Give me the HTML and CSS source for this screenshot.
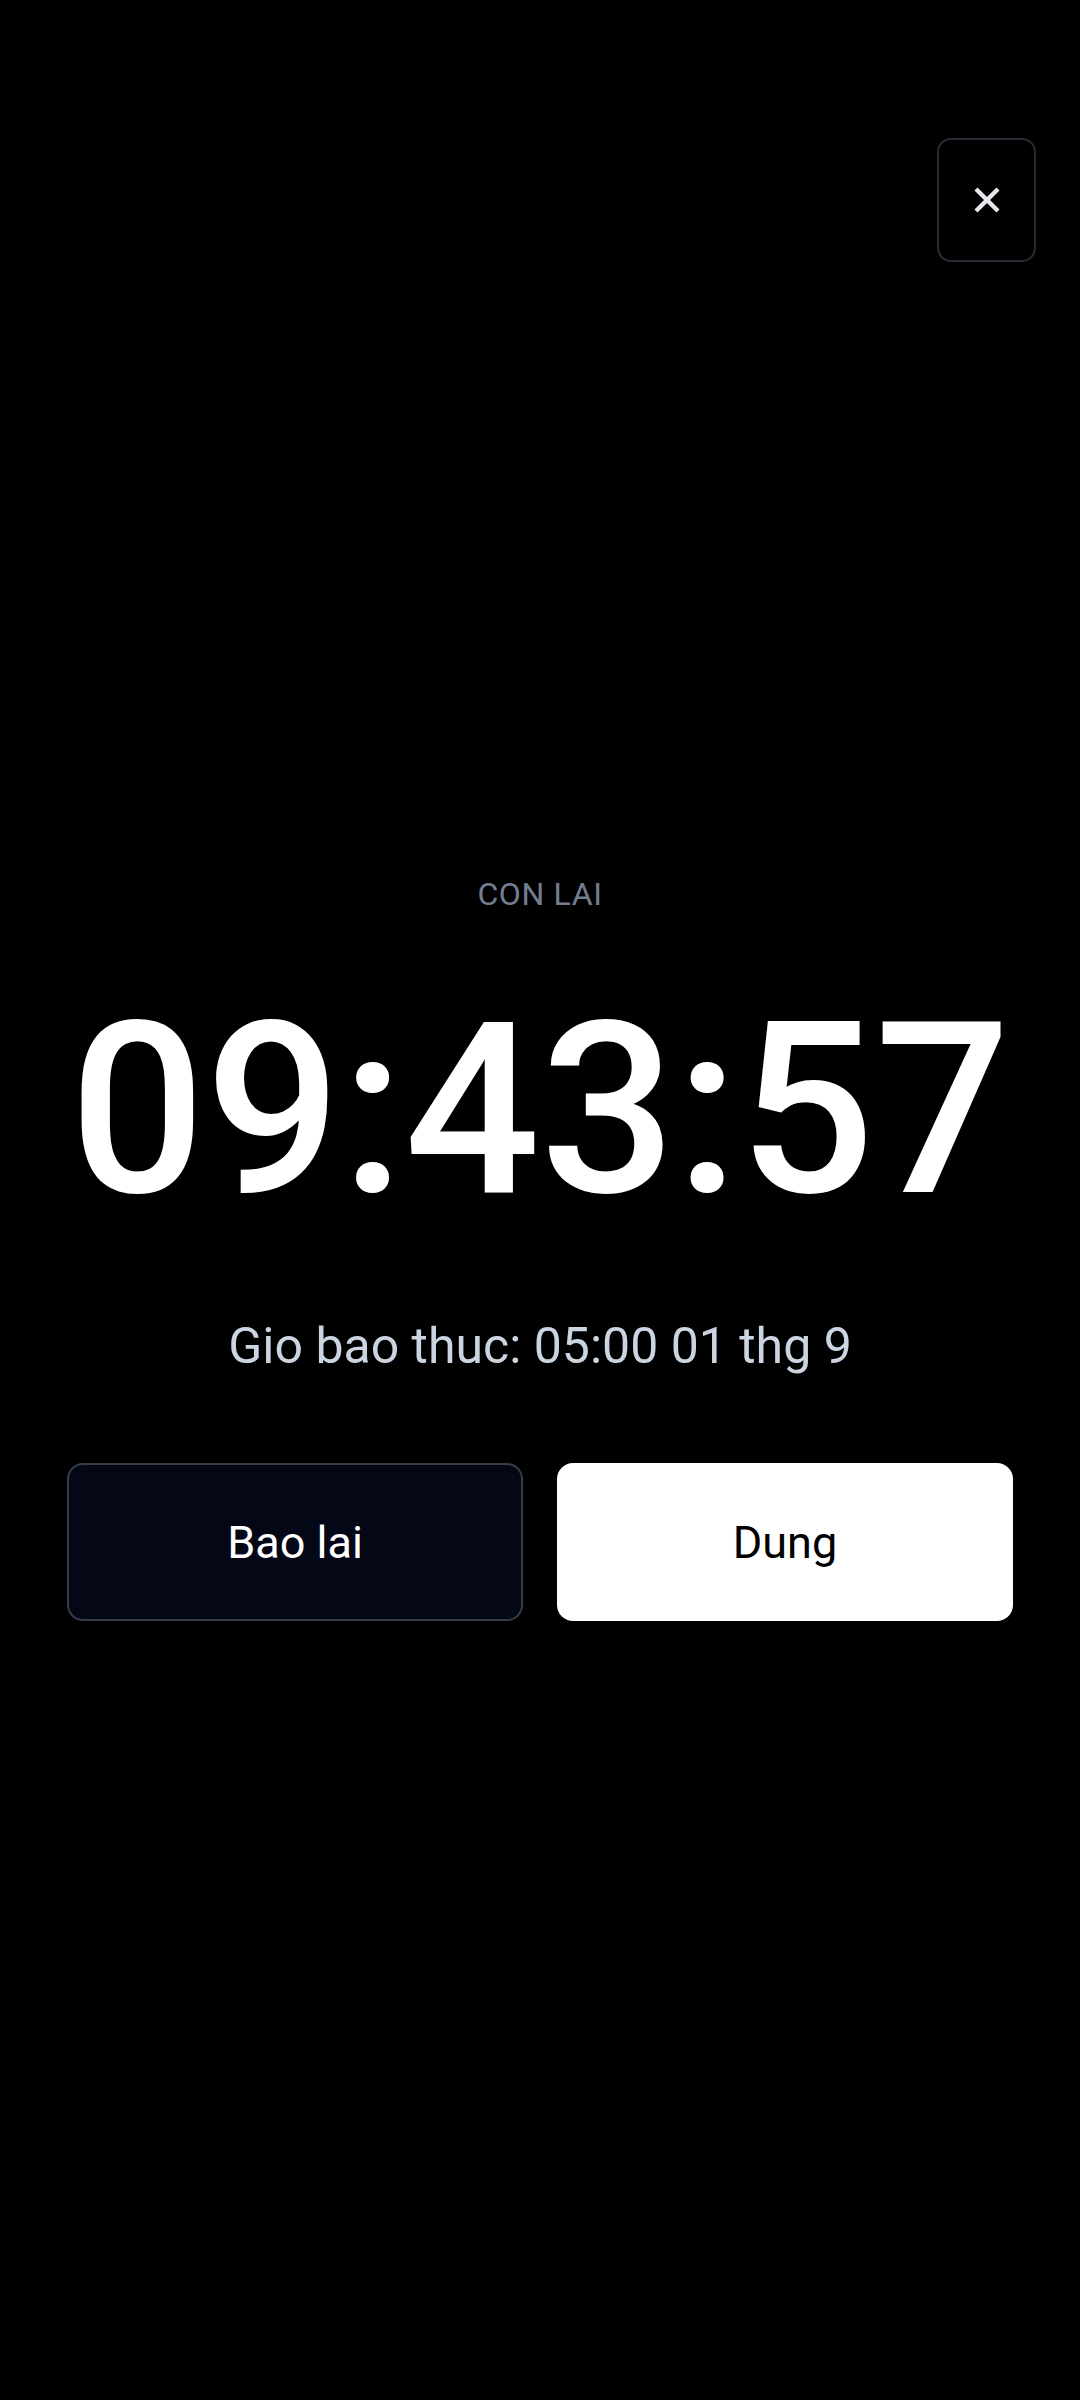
FILE: index.html
```html
<!DOCTYPE html>
<html lang="vi">
<head>
    <meta charset="UTF-8">
    <meta name="viewport" content="width=device-width, initial-scale=1.0">
    <title>Bao thuc</title>
    <link rel="stylesheet" href="styles.css">
</head>
<body>
    <div class="alarm-screen">
        <div class="top-bar">
            <button class="close-button" aria-label="Dong">
                <svg width="28" height="28" viewBox="0 0 28 28">
                    <path d="M3 3 L25 25 M25 3 L3 25" stroke="#e5e7eb" stroke-width="4.4" stroke-linecap="butt"/>
                </svg>
            </button>
        </div>

        <div class="countdown">
            <div class="label">CON LAI</div>
            <div class="time">09:43:57</div>
            <div class="alarm-at">Gio bao thuc: 05:00 01 thg 9</div>

            <div class="actions">
                <button class="snooze">Bao lai</button>
                <button class="stop">Dung</button>
            </div>
        </div>
    </div>
</body>
</html>
```

FILE: styles.css
```css
body {
    margin: 0;
    background-color: #000;
    font-family: Roboto, "Noto Sans", Arial, sans-serif;
    color: #fff;
}
.alarm-screen {
    width: 1080px;
    min-height: 2400px;
}
.top-bar {
    display: flex;
    justify-content: flex-end;
    padding: 138px 44px 0 0;
}
.close-button {
    width: 99px;
    height: 124px;
    display: flex;
    align-items: center;
    justify-content: center;
    background-color: #000;
    border: 2px solid #262a32;
    border-radius: 14px;
    padding: 0;
}
.countdown {
    display: flex;
    flex-direction: column;
    align-items: center;
    padding-top: 612px;
}
.label {
    font-size: 32px;
    line-height: 40px;
    letter-spacing: 0.02em;
    color: #737e91;
}
.time {
    margin-top: 76px;
    font-size: 239px;
    line-height: 240px;
    font-weight: 500;
    color: #fff;
}
.alarm-at {
    margin-top: 85px;
    font-size: 50px;
    line-height: 62px;
    color: #cbd5e1;
}
.actions {
    margin-top: 86px;
    display: grid;
    grid-template-columns: 1fr 1fr;
    gap: 34px;
    width: 946px;
}
.actions button {
    height: 158px;
    border-radius: 16px;
    font-family: Roboto, "Noto Sans", Arial, sans-serif;
    font-size: 45px;
    font-weight: 400;
    cursor: pointer;
}
.snooze {
    background-color: #040716;
    border: 2px solid #373c49;
    color: #fff;
}
.stop {
    background-color: #fff;
    border: none;
    color: #000;
}
```
